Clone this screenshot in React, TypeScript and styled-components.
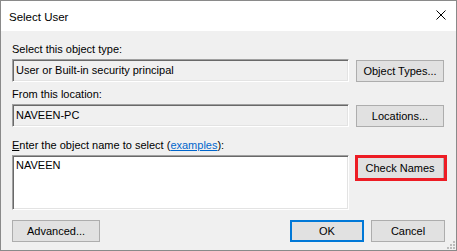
import React from "react";
import styled, { createGlobalStyle } from "styled-components";

const GlobalStyle = createGlobalStyle`
  html, body {
    margin: 0;
    padding: 0;
    background: #ffffff;
  }
  * {
    box-sizing: border-box;
  }
`;

const Window = styled.div`
  width: 457px;
  height: 251px;
  border: 1px solid #8a8a8a;
  display: flex;
  flex-direction: column;
  font-family: "Liberation Sans", Arial, sans-serif;
  font-size: 11px;
  color: #000;
  background: #f0f0f0;
  overflow: hidden;
`;

const TitleBar = styled.div`
  height: 30px;
  flex: none;
  background: #ffffff;
  display: flex;
  align-items: center;
  justify-content: space-between;
  padding: 0 10px 0 8px;
`;

const Title = styled.span`
  font-size: 11.5px;
  line-height: 14px;
  padding-top: 2px;
`;

const CloseIcon = styled.svg`
  display: block;
  margin-top: -2px;
`;

const Body = styled.div`
  position: relative;
  flex: 1;
  padding: 12px 11px 0 11px;
  display: flex;
  flex-direction: column;
`;

const FieldLabel = styled.div<{ $gap?: number }>`
  line-height: 13px;
  height: 13px;
  margin-top: ${(p) => p.$gap ?? 0}px;
  white-space: nowrap;
`;

const AccessKey = styled.span`
  text-decoration: underline;
`;

const Link = styled.span`
  color: #0066cc;
  text-decoration: underline;
`;

const FieldRow = styled.div`
  display: flex;
  gap: 7px;
  margin-top: 3px;
  align-items: flex-start;
`;

const TextBox = styled.div<{ $tall?: boolean; $readOnly?: boolean }>`
  width: 337px;
  height: ${(p) => (p.$tall ? 55 : 23)}px;
  background: ${(p) => (p.$readOnly ? "#f0f0f0" : "#ffffff")};
  border: 1px solid;
  border-color: #a0a0a0 #ffffff #ffffff #a0a0a0;
  box-shadow: inset 1px 1px 0 #696969, inset -1px -1px 0 #e3e3e3;
  padding: ${(p) => (p.$tall ? "3px 3px" : "4px 3px")};
  line-height: 13px;
  white-space: nowrap;
`;

const Button = styled.div<{ $width?: number; $default?: boolean; $offset?: number }>`
  position: relative;
  width: ${(p) => p.$width ?? 88}px;
  height: 22px;
  margin-top: ${(p) => p.$offset ?? 1}px;
  flex: none;
  background: #e1e1e1;
  border: ${(p) => (p.$default ? "2px solid #0078d7" : "1px solid #adadad")};
  display: flex;
  align-items: center;
  justify-content: center;
  line-height: 13px;
  white-space: nowrap;
`;

const Highlight = styled.div`
  position: absolute;
  top: -3px;
  left: -2px;
  right: -4px;
  bottom: -3px;
  border: 3px solid #ed1c24;
  pointer-events: none;
`;

const Footer = styled.div`
  display: flex;
  align-items: center;
  margin-top: 10px;
`;

const FooterRight = styled.div`
  margin-left: auto;
  display: flex;
  gap: 7px;
`;

const Grip = styled.svg`
  position: absolute;
  right: 1px;
  bottom: 1px;
`;

export default function App() {
  return (
    <>
      <GlobalStyle />
      <Window>
        <TitleBar>
          <Title>Select User</Title>
          <CloseIcon width="10" height="10" viewBox="0 0 10 10">
            <path d="M0.5 0.5 L9.5 9.5 M9.5 0.5 L0.5 9.5" stroke="#000" strokeWidth="1" />
          </CloseIcon>
        </TitleBar>
        <Body>
          <FieldLabel>Select this object type:</FieldLabel>
          <FieldRow>
            <TextBox $readOnly>User or Built-in security principal</TextBox>
            <Button>Object Types...</Button>
          </FieldRow>

          <FieldLabel $gap={6}>From this location:</FieldLabel>
          <FieldRow>
            <TextBox $readOnly>NAVEEN-PC</TextBox>
            <Button>Locations...</Button>
          </FieldRow>

          <FieldLabel $gap={12}>
            <AccessKey>E</AccessKey>nter the object name to select (<Link>examples</Link>):
          </FieldLabel>
          <FieldRow>
            <TextBox $tall>NAVEEN</TextBox>
            <Button $offset={2}>
              Check Names
              <Highlight />
            </Button>
          </FieldRow>

          <Footer>
            <Button $offset={0}>Advanced...</Button>
            <FooterRight>
              <Button $offset={0} $width={74} $default>
                OK
              </Button>
              <Button $offset={0} $width={74}>
                Cancel
              </Button>
            </FooterRight>
          </Footer>

          <Grip width="9" height="9" viewBox="0 0 9 9">
            <g fill="#bcbcbc">
              <rect x="7" y="1" width="2" height="2" />
              <rect x="4" y="4" width="2" height="2" />
              <rect x="7" y="4" width="2" height="2" />
              <rect x="1" y="7" width="2" height="2" />
              <rect x="4" y="7" width="2" height="2" />
              <rect x="7" y="7" width="2" height="2" />
            </g>
          </Grip>
        </Body>
      </Window>
    </>
  );
}
